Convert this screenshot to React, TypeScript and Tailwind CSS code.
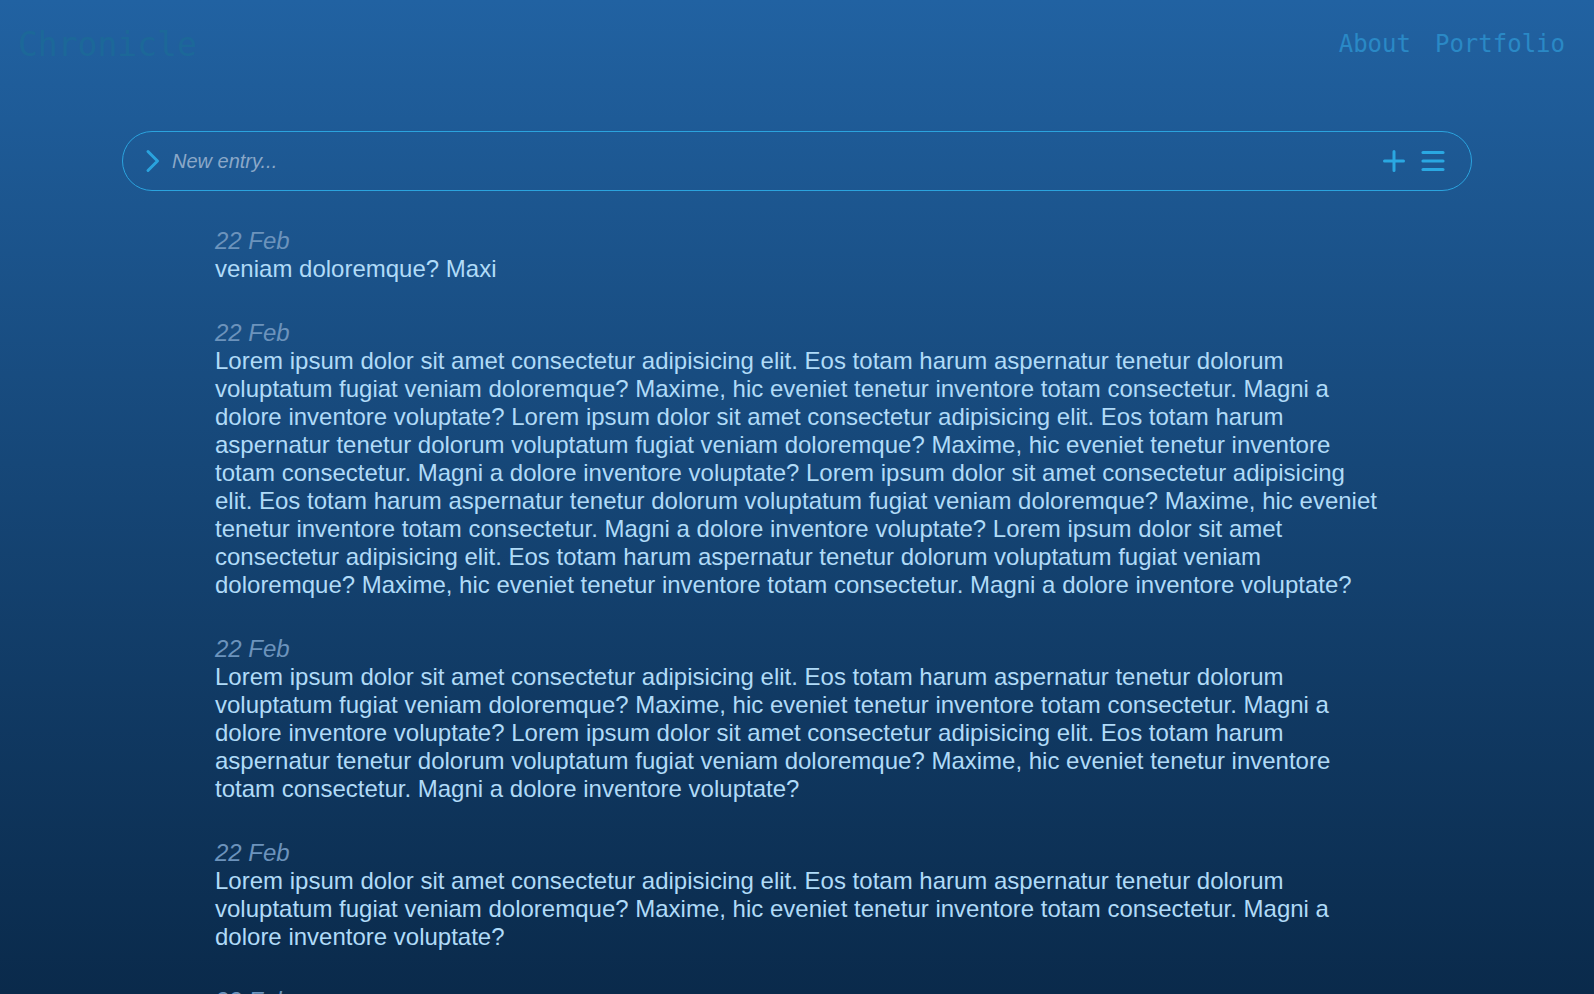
import React from "react";

const LOREM =
  "Lorem ipsum dolor sit amet consectetur adipisicing elit. Eos totam harum aspernatur tenetur dolorum voluptatum fugiat veniam doloremque? Maxime, hic eveniet tenetur inventore totam consectetur. Magni a dolore inventore voluptate?";

const entries = [
  "veniam doloremque? Maxi",
  [LOREM, LOREM, LOREM, LOREM].join(" "),
  [LOREM, LOREM].join(" "),
  LOREM,
  LOREM,
];

export default function App() {
  return (
    <div className="h-screen w-full overflow-hidden bg-gradient-to-b from-[#2162a2] to-[#0a2a4b]">
      <header className="flex h-[88px] items-center justify-between pl-[18px] pr-[29px] font-['DejaVu_Sans_Mono',monospace]">
        <div className="text-[33px] leading-none text-[#1c6899]">Chronicle</div>
        <nav className="flex gap-6 text-2xl leading-none text-[#2a89c6]">
          <span>About</span>
          <span>Portfolio</span>
        </nav>
      </header>

      <div className="mx-auto mt-[43px] flex h-[60px] w-[1350px] items-center rounded-full border border-[#2ba3de] pl-[22px] pr-[26px] font-['Liberation_Sans',Arial,sans-serif]">
        <svg width="16" height="24" viewBox="0 0 16 24" fill="none" className="shrink-0">
          <path d="M3 2.5 L12.5 12 L3 21.5" stroke="#2aa3de" strokeWidth="3" strokeLinecap="round" strokeLinejoin="round" />
        </svg>
        <div className="ml-[11px] flex-1 text-[20px] italic text-[#8ba8c8]">New entry...</div>
        <svg width="22" height="22" viewBox="0 0 22 22" fill="none" className="shrink-0">
          <path d="M11 1.5 V20.5 M1.5 11 H20.5" stroke="#2aa8e2" strokeWidth="3" strokeLinecap="round" />
        </svg>
        <svg width="24" height="22" viewBox="0 0 24 22" fill="none" className="ml-[16px] shrink-0">
          <path d="M2 2.5 H22 M2 11 H22 M2 19.5 H22" stroke="#2aa8e2" strokeWidth="3.2" strokeLinecap="round" />
        </svg>
      </div>

      <main className="mx-auto mt-[36px] w-[1164px] font-['Liberation_Sans',Arial,sans-serif] text-2xl leading-[28px]">
        {entries.map((t, i) => (
          <div key={i} className="mb-9">
            <div className="italic text-[#6c93bc]">22 Feb</div>
            <div className="text-[#b0dbf8]">{t}</div>
          </div>
        ))}
      </main>
    </div>
  );
}
